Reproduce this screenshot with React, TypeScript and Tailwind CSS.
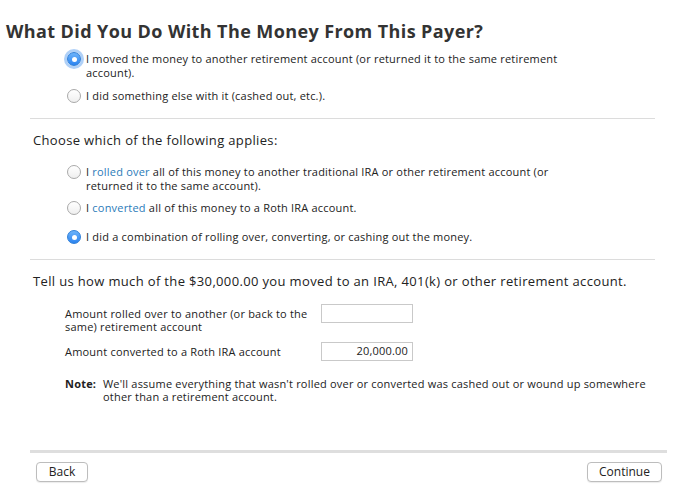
import React from "react";

function Radio({ checked, focus }: { checked?: boolean; focus?: boolean }) {
  if (checked) {
    return (
      <span
        className={
          "flex h-[14px] w-[14px] shrink-0 items-center justify-center rounded-full bg-gradient-to-b from-[#6cb3fa] to-[#2a84f0] border border-[#2f7fd8]" +
          (focus ? " shadow-[0_0_0_3px_rgba(110,170,240,0.55)]" : "")
        }
      >
        <span className="block h-[5px] w-[5px] rounded-full bg-white" />
      </span>
    );
  }
  return (
    <span className="block h-[14px] w-[14px] shrink-0 rounded-full border border-[#a9a9a9] bg-gradient-to-b from-white to-[#efefef]" />
  );
}

function Option({
  checked,
  focus,
  children,
  className = "",
}: {
  checked?: boolean;
  focus?: boolean;
  children: React.ReactNode;
  className?: string;
}) {
  return (
    <div className={"flex items-start gap-[5px] " + className}>
      <Radio checked={checked} focus={focus} />
      <p className="max-w-[480px] text-[11px] leading-[14px] tracking-[0.2px] text-[#222]">{children}</p>
    </div>
  );
}

export default function App() {
  return (
    <div
      className="relative h-[487px] w-[685px] overflow-hidden bg-white text-[#222]"
      style={{ fontFamily: '"Open Sans", "Liberation Sans", Arial, sans-serif' }}
    >
      <h1 className="pl-[6px] pt-[21px] text-[18px] font-bold leading-[20px] tracking-[0.4px] text-[#333]">
        What Did You Do With The Money From This Payer?
      </h1>

      <div className="mt-[11px] pl-[67px]">
        <Option checked focus>
          I moved the money to another retirement account (or returned it to the same retirement account).
        </Option>
        <Option className="mt-[9px]">I did something else with it (cashed out, etc.).</Option>
      </div>

      <div className="mx-[30px] mt-[15px] h-px bg-[#dcdcdc]" />

      <p className="mt-[13px] pl-[33px] text-[13px] leading-[16px] tracking-[0.35px]">
        Choose which of the following applies:
      </p>

      <div className="mt-[17px] pl-[67px]">
        <Option>
          I <span className="text-[#2b7bb9]">rolled over</span> all of this money to another traditional IRA or other
          retirement account (or returned it to the same account).
        </Option>
        <Option className="mt-[8px]">
          I <span className="text-[#2b7bb9]">converted</span> all of this money to a Roth IRA account.
        </Option>
        <Option checked className="mt-[15px]">
          I did a combination of rolling over, converting, or cashing out the money.
        </Option>
      </div>

      <div className="mx-[30px] mt-[15px] h-px bg-[#dcdcdc]" />

      <p className="mt-[13px] pl-[33px] text-[13px] leading-[16px] tracking-[0.35px]">
        Tell us how much of the $30,000.00 you moved to an IRA, 401(k) or other retirement account.
      </p>

      <div className="mt-[15px] pl-[65px] tracking-[0.2px]">
        <div className="flex items-start">
          <div className="w-[256px] pt-[3px]">
            <p className="max-w-[250px] text-[11px] leading-[13px]">
              Amount rolled over to another (or back to the same) retirement account
            </p>
          </div>
          <div className="h-[19px] w-[92px] border border-[#c9c9c9] bg-white" />
        </div>
        <div className="mt-[9px] flex items-center">
          <p className="w-[256px] text-[11px] leading-[13px]">Amount converted to a Roth IRA account</p>
          <div className="flex h-[19px] w-[92px] items-center justify-end border border-[#c9c9c9] bg-white pr-[4px] text-[11px]">
            20,000.00
          </div>
        </div>

        <div className="mt-[16px] flex text-[11px] leading-[13px]">
          <span className="w-[38px] shrink-0 font-bold">Note:</span>
          <p className="w-[560px]">
            We'll assume everything that wasn't rolled over or converted was cashed out or wound up somewhere other
            than a retirement account.
          </p>
        </div>
      </div>

      <div className="absolute left-[30px] right-[18px] top-[450px] h-[3px] bg-[#dedede]" />

      <div className="absolute left-[36px] right-[23px] top-[462px] flex justify-between">
        <button className="h-[20px] w-[52px] rounded-[4px] border border-[#bdbdbd] bg-white text-[12px] text-[#222] shadow-[0_1px_1px_rgba(0,0,0,0.08)]">
          Back
        </button>
        <button className="h-[20px] w-[75px] rounded-[4px] border border-[#bdbdbd] bg-white text-[12px] text-[#222] shadow-[0_1px_1px_rgba(0,0,0,0.08)]">
          Continue
        </button>
      </div>
    </div>
  );
}
